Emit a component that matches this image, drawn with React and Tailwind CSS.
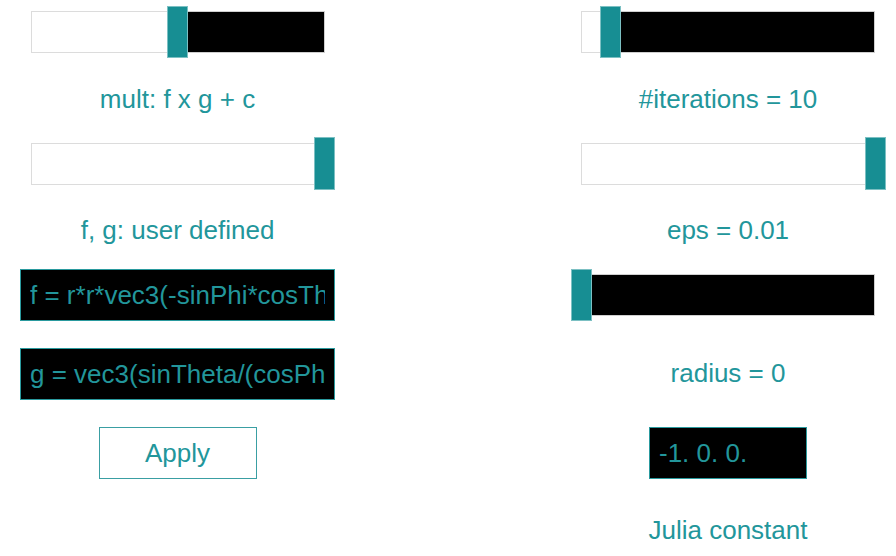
const font = { fontFamily: '"Liberation Sans", Arial, sans-serif' }

function Slider({ before, after, thumbH = 'h-[52px]', offset = '' }) {
  return (
    <div className={`flex items-center ${offset}`}>
      {before > 0 && (
        <div className="h-[42px] border border-r-0 border-[#dcdcdc] bg-white" style={{ width: before }} />
      )}
      <div className={`w-[21px] ${thumbH} border border-[#7cc0c3] bg-[#178e93]`} />
      {after > 0 && <div className="h-[42px] border border-l-0 border-[#cfcfcf] bg-black" style={{ width: after }} />}
    </div>
  )
}

function Label({ children, className = '' }) {
  return <p className={`h-[30px] text-center text-[26px] leading-[30px] text-[#22969b] ${className}`}>{children}</p>
}

function CodeInput({ value, className = '' }) {
  return (
    <input
      type="text"
      readOnly
      defaultValue={value}
      className={`h-[52px] border border-[#2a9a9e] bg-black px-[9px] text-[26px] text-[#22969b] outline-none ${className}`}
      style={font}
    />
  )
}

export default function App() {
  return (
    <div className="flex h-[556px] w-[896px] bg-white" style={font}>
      <div className="ml-[20px] flex w-[315px] flex-col items-center pt-[6px]">
        <Slider before={136} after={137} offset="self-start ml-[11px]" />
        <Label className="mt-[26px]">mult: f x g + c</Label>
        <Slider before={283} after={0} thumbH="h-[53px]" offset="mt-[23px] self-start ml-[11px]" />
        <Label className="mt-[25px]">f, g: user defined</Label>
        <CodeInput
          className="mt-[24px] w-[315px]"
          value="f = r*r*vec3(-sinPhi*cosTheta, cosPhi*cosTheta, sinTheta)"
        />
        <CodeInput className="mt-[27px] w-[315px]" value="g = vec3(sinTheta/(cosPhi*cosPhi), 0., 0.)" />
        <button
          type="button"
          className="mt-[27px] h-[52px] w-[158px] border border-[#3a9fa3] bg-white text-[26px] text-[#22969b]"
        >
          Apply
        </button>
      </div>

      <div className="ml-[236px] flex w-[314px] flex-col items-center pt-[6px]">
        <Slider before={19} after={254} offset="self-start ml-[10px]" />
        <Label className="mt-[26px]">#iterations = 10</Label>
        <Slider before={284} after={0} thumbH="h-[53px]" offset="mt-[23px] self-start ml-[10px]" />
        <Label className="mt-[25px]">eps = 0.01</Label>
        <Slider before={0} after={283} offset="mt-[24px] self-start" />
        <Label className="mt-[37px]">radius = 0</Label>
        <CodeInput className="mt-[39px] w-[158px]" value="-1. 0. 0." />
        <Label className="mt-[36px]">Julia constant</Label>
      </div>
    </div>
  )
}
